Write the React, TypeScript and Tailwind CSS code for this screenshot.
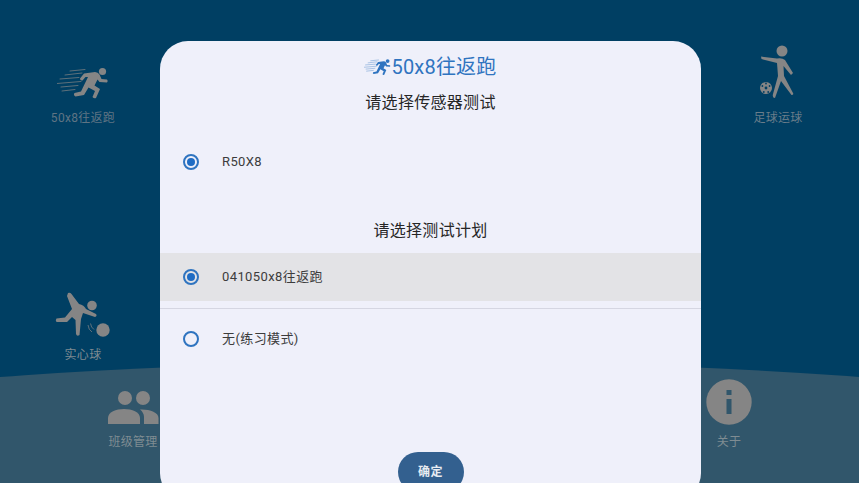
const font = { fontFamily: '"Roboto", "Noto Sans CJK SC", sans-serif' };

function Runner({ className, fill }: { className: string; fill: string }) {
  return (
    <svg viewBox="0 0 52 32" className={className} fill={fill}>
      <circle cx="45.5" cy="4.5" r="3.6" />
      <path d="M27 6.5 L38 5 Q41 5 42.5 7.5 L44.5 12 L50 12.5 Q51.5 14 50 15.5 L42.5 15 L40.5 12.5 L37.5 18.5 L43 22 L39 31 Q37 32 35.5 30 L38 24 L31.5 20.5 L27 28 L18.5 29.5 Q16 28 17.5 26 L24 24.5 L31 10 L28.5 10 L25.5 13.5 Q23 14 23 11.5 Z" />
      <g stroke={fill} strokeWidth="1" strokeLinecap="round" opacity="0.7">
        <path d="M13 4 L28 2.5" />
        <path d="M8 8 L25 6" />
        <path d="M3 12 L22 10.5" />
        <path d="M0 16.5 L24 14.5" />
        <path d="M4 20 L21 18.5" />
        <path d="M5 24 L18 22.5" />
      </g>
    </svg>
  );
}

function Soccer({ className }: { className: string }) {
  return (
    <svg viewBox="0 0 36 58" className={className} fill="#858585">
      <circle cx="22" cy="8" r="5.5" />
      <path d="M1 13.5 L17 15.5 Q22 14.5 25 17 L33 30 L31 32 L23.5 23 L24 33 L33 50 Q34 52 31.5 52 L21 38 L15 55 Q12 55 13 51 L18 33 L17 20 L1.5 16 Z" />
      <circle cx="6" cy="45" r="6" />
      <g fill="#003f63">
        <circle cx="6" cy="45" r="1.4" />
        <circle cx="2.4" cy="43" r="0.9" />
        <circle cx="9.6" cy="43" r="0.9" />
        <circle cx="3.8" cy="49" r="0.9" />
        <circle cx="8.2" cy="49" r="0.9" />
        <circle cx="6" cy="40.5" r="0.9" />
      </g>
    </svg>
  );
}

function Ball({ className }: { className: string }) {
  return (
    <svg viewBox="0 0 56 46" className={className} fill="#858585">
      <circle cx="37" cy="13.5" r="4.8" />
      <path d="M13 1 Q15 0 16.5 2 L24 12 Q29 13 31 17 L41 22 Q42.5 24 40 25 L28 21 L26 27 L24.5 43 Q22 45 21 42 L20.5 28 L17 25 L12 30 L1.5 30 Q0 28 1.5 26.5 L10 25.5 L17 17 L12 4 Z" />
      <circle cx="48" cy="38" r="6.7" />
      <path d="M33 33 Q33.5 38 37 40 M35.5 31.5 Q36 35.5 39 37.5" stroke="#858585" strokeWidth="0.7" fill="none" />
    </svg>
  );
}

function People({ className }: { className: string }) {
  return (
    <svg viewBox="0 0 51 33" className={className} fill="#858585">
      <circle cx="17" cy="7" r="7" />
      <circle cx="35" cy="7" r="7" />
      <path d="M0 33 L0 27 C0 21 8 18 16 18 C24 18 32 21 32 27 L32 33 Z" />
      <path d="M32 18.5 C41 18 50.5 21 50.5 27 L50.5 33 L36 33 L36 26 C36 23 34.5 20.5 32 18.5 Z" />
    </svg>
  );
}

function Info({ className }: { className: string }) {
  return (
    <svg viewBox="0 0 46 46" className={className}>
      <circle cx="23" cy="23" r="22.7" fill="#858585" />
      <rect x="20.5" y="11" width="5" height="5" fill="#31566b" />
      <rect x="20.5" y="20" width="5" height="15" fill="#31566b" />
    </svg>
  );
}

function Radio({ checked }: { checked: boolean }) {
  return (
    <span className="flex h-[16px] w-[16px] shrink-0 items-center justify-center rounded-full border-2 border-[#2f74c0]">
      {checked && <span className="h-[8px] w-[8px] rounded-full bg-[#1f6cc4]" />}
    </span>
  );
}

function Option({ label, checked }: { label: string; checked: boolean }) {
  return (
    <div className="flex items-center gap-[23px] pl-[23px] text-[13px] tracking-[0.4px] text-[#3c3c3c]">
      <Radio checked={checked} />
      <span>{label}</span>
    </div>
  );
}

function Item({ icon, label, tone }: { icon: React.ReactNode; label: string; tone: string }) {
  return (
    <div className="flex w-[80px] flex-col items-center">
      <div className="flex h-[60px] items-end justify-center">{icon}</div>
      <span className={`mt-[9px] whitespace-nowrap text-[12px] leading-[16px] tracking-[0.3px] ${tone}`}>{label}</span>
    </div>
  );
}

export default function App() {
  return (
    <div style={font} className="relative h-[483px] w-[859px] overflow-hidden bg-[#003f63]">
      <div className="absolute left-[-430px] top-[362px] h-[224px] w-[1720px] rounded-[50%] bg-[#31566b]" />

      <div className="relative flex h-full flex-col">
        <div className="flex justify-between pl-[43px] pr-[41px] pt-[41px]">
          <Item tone="text-[#5f7483]" label="50x8往返跑" icon={<Runner fill="#858585" className="mb-[2px] h-[32px] w-[52px]" />} />
          <Item tone="text-[#6a7d8a]" label="足球运球" icon={<Soccer className="h-[58px] w-[36px]" />} />
        </div>
        <div className="mt-[152px] flex pl-[43px]">
          <Item tone="text-[#7f8b92]" label="实心球" icon={<Ball className="h-[46px] w-[56px]" />} />
        </div>
        <div className="mt-[2px] flex justify-between pl-[93px] pr-[90px]">
          <Item tone="text-[#7f8c92]" label="班级管理" icon={<People className="mb-[1px] h-[33px] w-[51px]" />} />
          <Item tone="text-[#7f8c92]" label="关于" icon={<Info className="h-[46px] w-[46px]" />} />
        </div>
      </div>

      <div className="absolute left-[160px] top-[41px] flex h-[460px] w-[541px] flex-col rounded-[28px] bg-[#eff0fa]">
        <div className="mt-[13px] flex h-[26px] items-center justify-center">
          <Runner fill="#2f74c0" className="h-[18px] w-[27px]" />
          <span className="text-[20px] leading-[26px] tracking-[0.2px] text-[#2f74c0]">50x8往返跑</span>
        </div>
        <div className="mt-[11px] text-center text-[16px] leading-[24px] tracking-[0.3px] text-[#262626]">请选择传感器测试</div>
        <div className="mt-[23px] flex h-[48px] items-center">
          <div className="w-full"><Option label="R50X8" checked /></div>
        </div>
        <div className="mt-[33px] text-center text-[16px] leading-[24px] tracking-[0.3px] text-[#262626]">请选择测试计划</div>
        <div className="mt-[10px] flex h-[48px] items-center bg-[#e3e3e6]">
          <div className="w-full"><Option label="041050x8往返跑" checked /></div>
        </div>
        <div className="mt-[7px] h-px bg-[#d5d6e2]" />
        <div className="mt-[6px] flex h-[48px] items-center">
          <div className="w-full"><Option label="无(练习模式)" checked={false} /></div>
        </div>
        <button className="mx-auto mt-[89px] flex h-[40px] w-[66px] items-center justify-center rounded-full bg-[#33608f] text-[12px] font-bold tracking-[0.5px] text-[#e8ecf2]">
          确定
        </button>
      </div>
    </div>
  );
}
